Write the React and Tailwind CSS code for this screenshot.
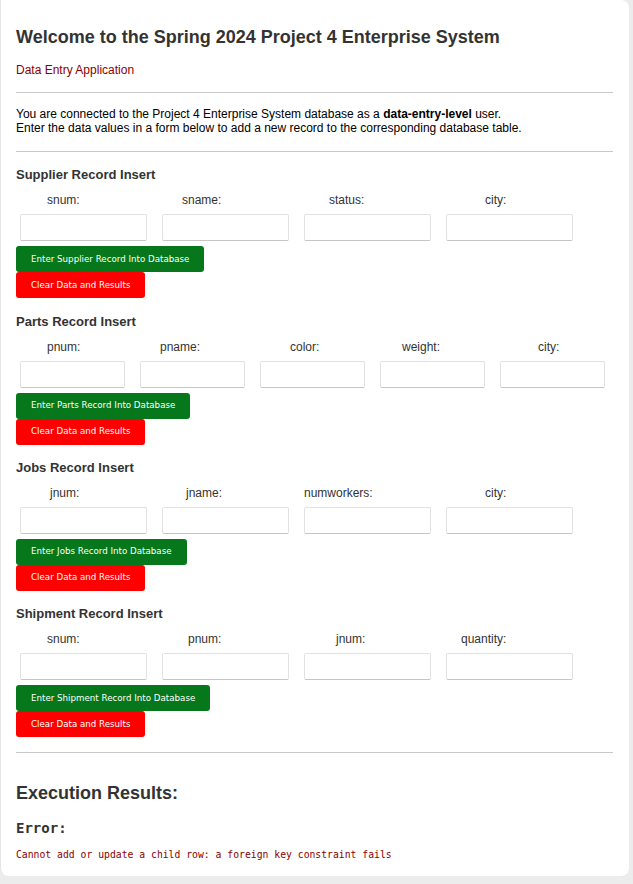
import React from "react";

const sections = [
  {
    title: "Supplier Record Insert",
    name: "Supplier",
    width: "w-[127px]",
    fields: [
      ["snum:", "pl-[27px]"],
      ["sname:", "pl-[20px]"],
      ["status:", "pl-[25px]"],
      ["city:", "pl-[39px]"],
    ],
  },
  {
    title: "Parts Record Insert",
    name: "Parts",
    width: "w-[105px]",
    fields: [
      ["pnum:", "pl-[27px]"],
      ["pname:", "pl-[20px]"],
      ["color:", "pl-[30px]"],
      ["weight:", "pl-[22px]"],
      ["city:", "pl-[38px]"],
    ],
  },
  {
    title: "Jobs Record Insert",
    name: "Jobs",
    width: "w-[127px]",
    fields: [
      ["jnum:", "pl-[30px]"],
      ["jname:", "pl-[24px]"],
      ["numworkers:", "pl-0"],
      ["city:", "pl-[39px]"],
    ],
  },
  {
    title: "Shipment Record Insert",
    name: "Shipment",
    width: "w-[127px]",
    fields: [
      ["snum:", "pl-[27px]"],
      ["pnum:", "pl-[26px]"],
      ["jnum:", "pl-[32px]"],
      ["quantity:", "pl-[15px]"],
    ],
  },
];

function RecordForm({ section }) {
  return (
    <div className="mt-[15.3px]">
      <h3 className="text-[13px] leading-[16px] font-bold text-[#333]">{section.title}</h3>

      {/* labels line up with the inputs below */}
      <div className="mt-[10px] ml-[4px] flex gap-[15px]">
        {section.fields.map(([label, pad]) => (
          <div key={label} className={`${section.width} ${pad} text-[12px] leading-[14px] text-[#333]`}>
            {label}
          </div>
        ))}
      </div>

      <div className="mt-[7px] ml-[4px] flex gap-[15px]">
        {section.fields.map(([label]) => (
          <input
            key={label}
            type="text"
            className={`${section.width} h-[27px] bg-white border border-[#e2e2e2] border-b-[#c6c6c6] rounded-[2px] outline-none`}
          />
        ))}
      </div>

      <div className="mt-[5px] flex flex-col items-start">
        <button className="h-[26px] px-[15px] bg-[#06781b] text-white text-[8.7px] rounded-[3px] font-['DejaVu_Sans',sans-serif]">
          Enter {section.name} Record Into Database
        </button>
        <button className="h-[26px] px-[15px] bg-[#ff0000] text-white text-[8.7px] rounded-[3px] font-['DejaVu_Sans',sans-serif]">
          Clear Data and Results
        </button>
      </div>
    </div>
  );
}

export default function App() {
  return (
    <div className="min-h-[884px] bg-[#ececec] pr-[4px] pb-[4px] font-['Liberation_Sans',Arial,sans-serif]">
      <div className="bg-white rounded-b-lg rounded-tr-lg border-l border-[#e4e4e4] pl-[15px] pr-4 pt-[26px] pb-[15px]">
        <h1 className="text-[18px] leading-[22px] font-bold text-[#333]">
          Welcome to the Spring 2024 Project 4 Enterprise System
        </h1>
        <p className="mt-[15px] text-[12px] leading-[14px] text-[#8b0000]">Data Entry Application</p>

        <hr className="mt-[15px] border-t border-[#c8c8c8]" />

        <p className="mt-[14px] text-[12px] leading-[14px] text-black">
          You are connected to the Project 4 Enterprise System database as a{" "}
          <span className="font-bold">data-entry-level</span> user.
          <br />
          Enter the data values in a form below to add a new record to the corresponding database table.
        </p>

        <hr className="mt-[16px] border-t border-[#c8c8c8]" />

        {sections.map((s) => (
          <RecordForm key={s.name} section={s} />
        ))}

        <hr className="mt-[15px] border-t border-[#c8c8c8]" />

        {/* Execution results */}
        <h2 className="mt-[29px] text-[18px] leading-[22px] font-bold text-[#333]">Execution Results:</h2>
        <h3 className="mt-[16px] text-[14px] leading-[16px] font-bold text-[#333] font-['DejaVu_Sans_Mono',monospace]">
          Error:
        </h3>
        <p className="mt-[13px] text-[9.75px] leading-[12px] text-[#8b0000] font-['DejaVu_Sans_Mono',monospace]">
          Cannot add or update a child row: a foreign key constraint fails
        </p>
      </div>
    </div>
  );
}
